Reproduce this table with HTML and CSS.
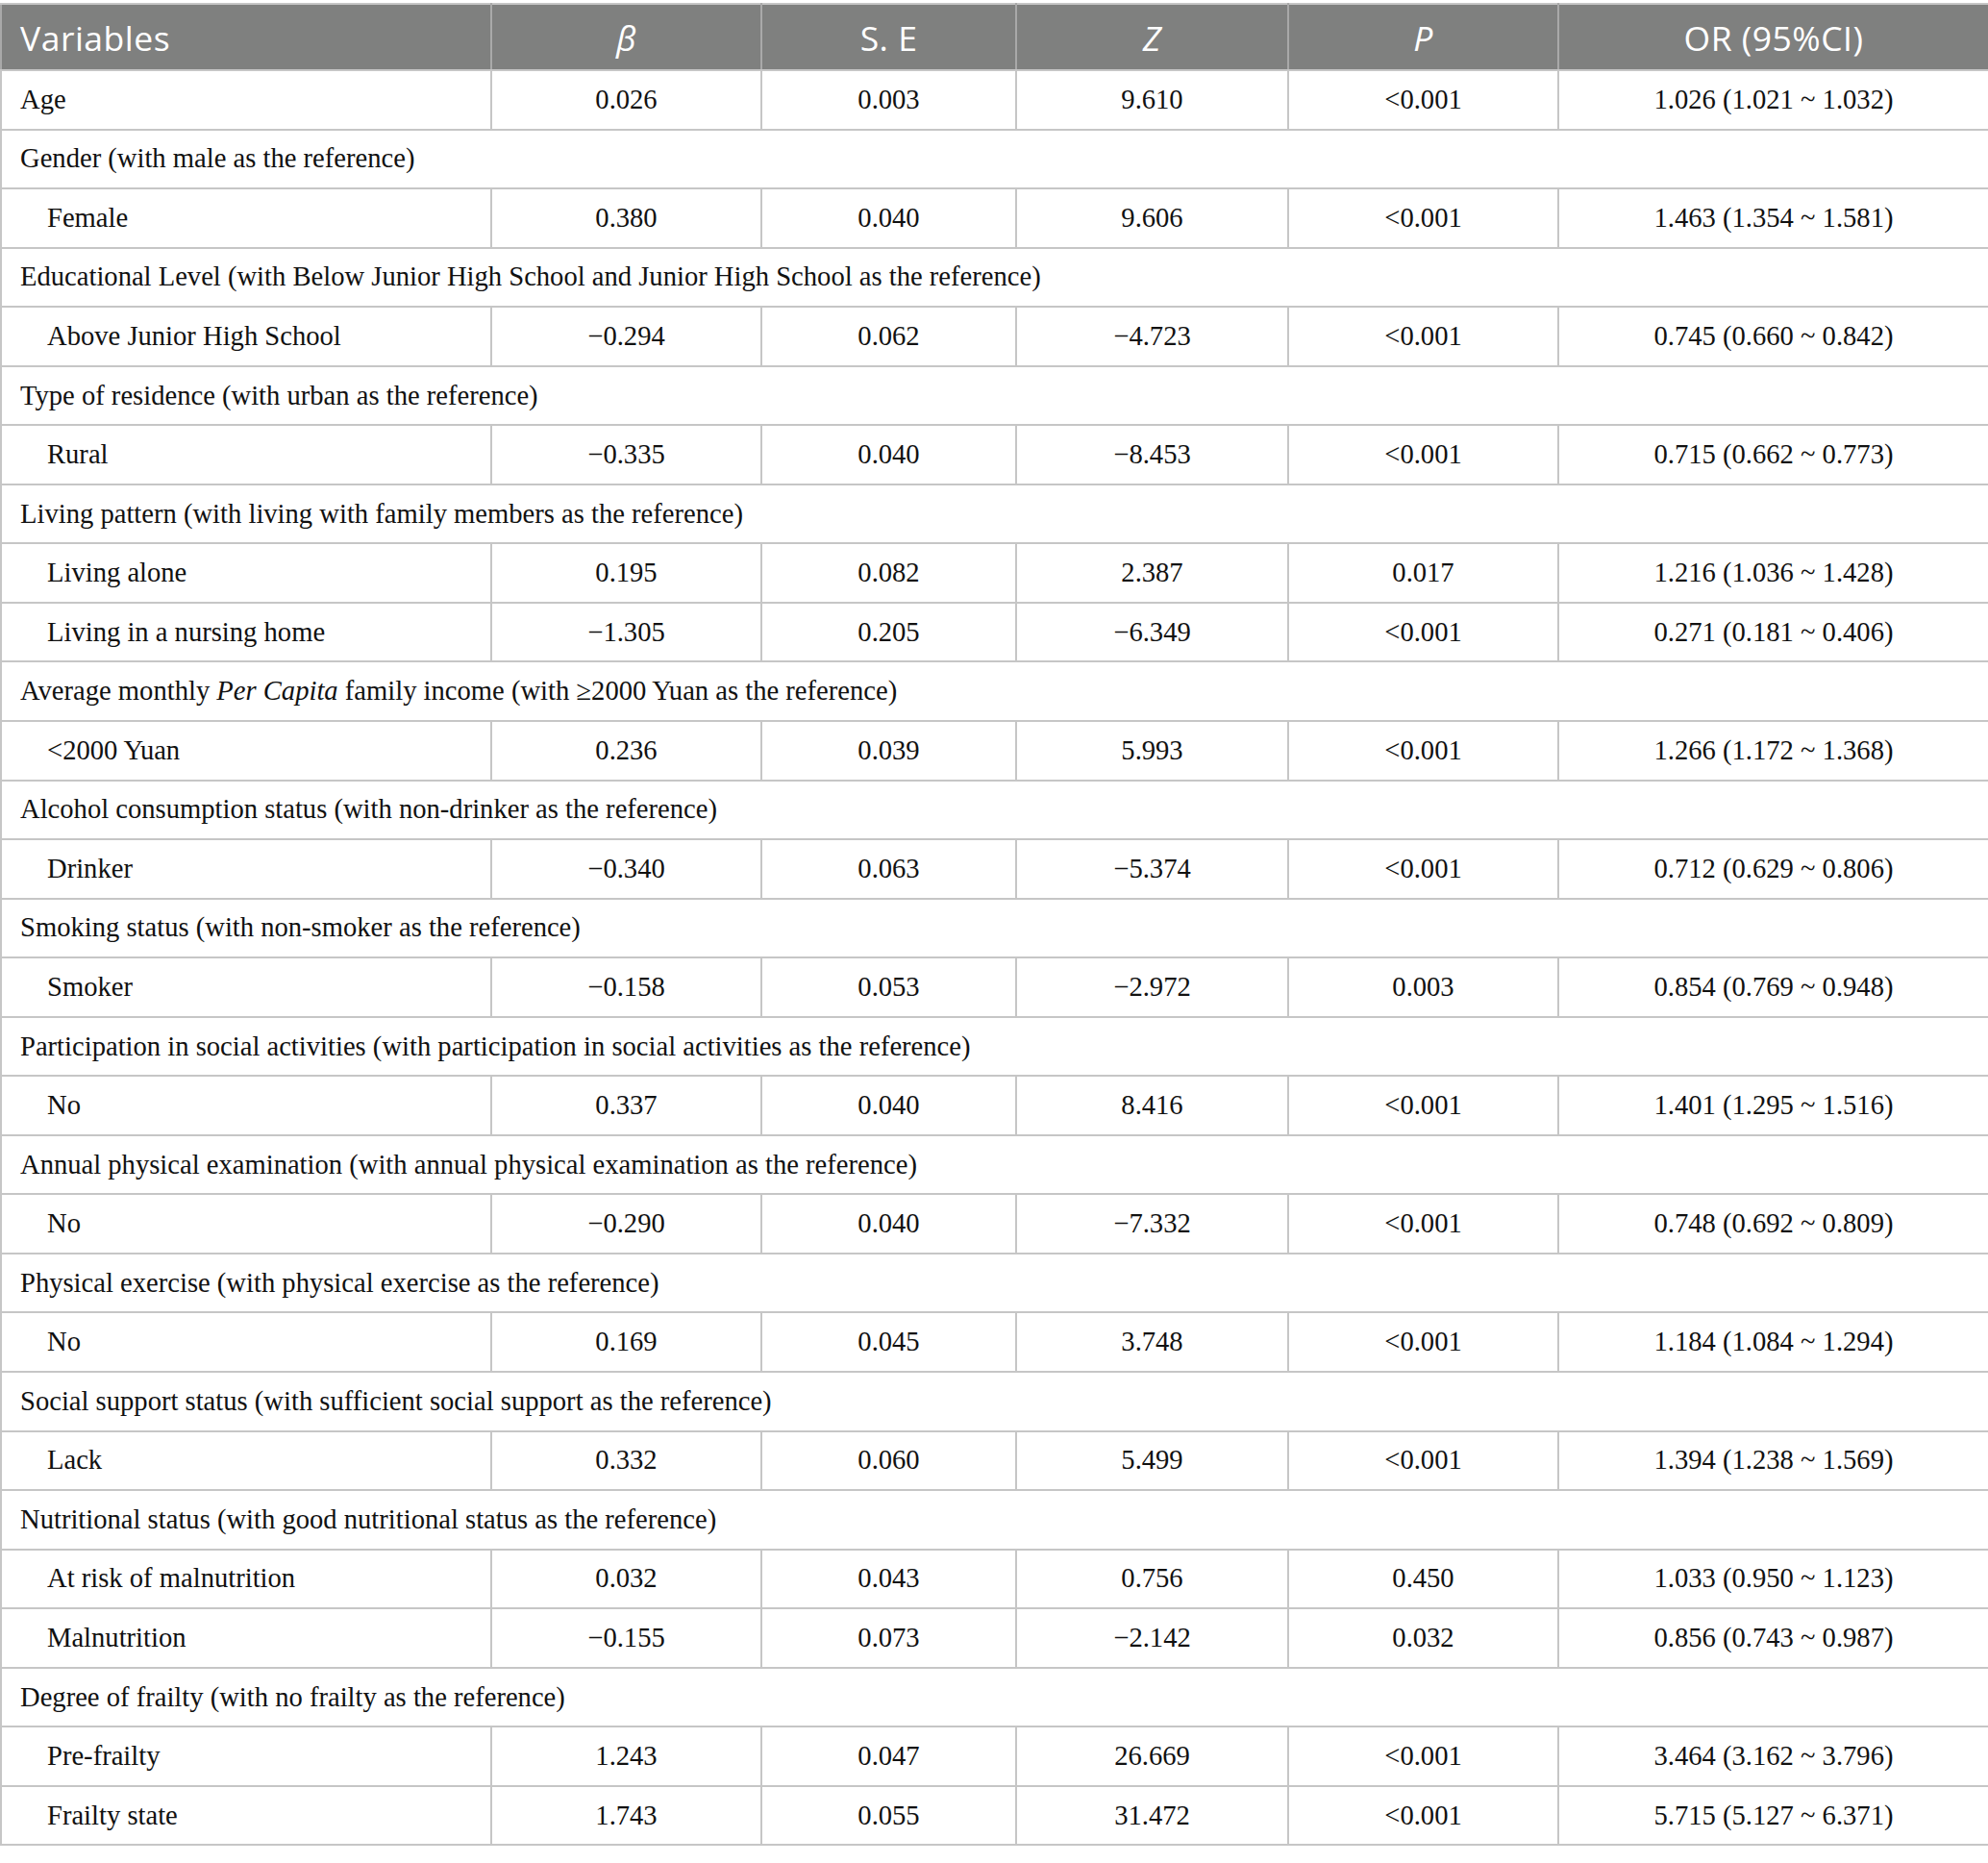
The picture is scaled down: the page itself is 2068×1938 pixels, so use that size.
FILE: index.html
```html
<!DOCTYPE html>
<html lang="en">
<head>
<meta charset="utf-8">
<title>Table</title>
<link rel="stylesheet" href="styles.css">
</head>
<body>
<div class="page">
<table class="tbl">
<colgroup>
<col class="c1"><col class="c2"><col class="c3"><col class="c4"><col class="c5"><col class="c6">
</colgroup>
<thead>
<tr>
<th class="left">Variables</th>
<th><i>β</i></th>
<th>S. E</th>
<th><i>Z</i></th>
<th><i>P</i></th>
<th>OR (95%CI)</th>
</tr>
</thead>
<tbody>
<tr><td class="lab">Age</td><td>0.026</td><td>0.003</td><td>9.610</td><td>&lt;0.001</td><td>1.026 (1.021 ~ 1.032)</td></tr>
<tr><td class="grp" colspan="6">Gender (with male as the reference)</td></tr>
<tr><td class="lab sub">Female</td><td>0.380</td><td>0.040</td><td>9.606</td><td>&lt;0.001</td><td>1.463 (1.354 ~ 1.581)</td></tr>
<tr><td class="grp" colspan="6">Educational Level (with Below Junior High School and Junior High School as the reference)</td></tr>
<tr><td class="lab sub">Above Junior High School</td><td>−0.294</td><td>0.062</td><td>−4.723</td><td>&lt;0.001</td><td>0.745 (0.660 ~ 0.842)</td></tr>
<tr><td class="grp" colspan="6">Type of residence (with urban as the reference)</td></tr>
<tr><td class="lab sub">Rural</td><td>−0.335</td><td>0.040</td><td>−8.453</td><td>&lt;0.001</td><td>0.715 (0.662 ~ 0.773)</td></tr>
<tr><td class="grp" colspan="6">Living pattern (with living with family members as the reference)</td></tr>
<tr><td class="lab sub">Living alone</td><td>0.195</td><td>0.082</td><td>2.387</td><td>0.017</td><td>1.216 (1.036 ~ 1.428)</td></tr>
<tr><td class="lab sub">Living in a nursing home</td><td>−1.305</td><td>0.205</td><td>−6.349</td><td>&lt;0.001</td><td>0.271 (0.181 ~ 0.406)</td></tr>
<tr><td class="grp" colspan="6">Average monthly <i>Per Capita</i> family income (with ≥2000 Yuan as the reference)</td></tr>
<tr><td class="lab sub">&lt;2000 Yuan</td><td>0.236</td><td>0.039</td><td>5.993</td><td>&lt;0.001</td><td>1.266 (1.172 ~ 1.368)</td></tr>
<tr><td class="grp" colspan="6">Alcohol consumption status (with non-drinker as the reference)</td></tr>
<tr><td class="lab sub">Drinker</td><td>−0.340</td><td>0.063</td><td>−5.374</td><td>&lt;0.001</td><td>0.712 (0.629 ~ 0.806)</td></tr>
<tr><td class="grp" colspan="6">Smoking status (with non-smoker as the reference)</td></tr>
<tr><td class="lab sub">Smoker</td><td>−0.158</td><td>0.053</td><td>−2.972</td><td>0.003</td><td>0.854 (0.769 ~ 0.948)</td></tr>
<tr><td class="grp" colspan="6">Participation in social activities (with participation in social activities as the reference)</td></tr>
<tr><td class="lab sub">No</td><td>0.337</td><td>0.040</td><td>8.416</td><td>&lt;0.001</td><td>1.401 (1.295 ~ 1.516)</td></tr>
<tr><td class="grp" colspan="6">Annual physical examination (with annual physical examination as the reference)</td></tr>
<tr><td class="lab sub">No</td><td>−0.290</td><td>0.040</td><td>−7.332</td><td>&lt;0.001</td><td>0.748 (0.692 ~ 0.809)</td></tr>
<tr><td class="grp" colspan="6">Physical exercise (with physical exercise as the reference)</td></tr>
<tr><td class="lab sub">No</td><td>0.169</td><td>0.045</td><td>3.748</td><td>&lt;0.001</td><td>1.184 (1.084 ~ 1.294)</td></tr>
<tr><td class="grp" colspan="6">Social support status (with sufficient social support as the reference)</td></tr>
<tr><td class="lab sub">Lack</td><td>0.332</td><td>0.060</td><td>5.499</td><td>&lt;0.001</td><td>1.394 (1.238 ~ 1.569)</td></tr>
<tr><td class="grp" colspan="6">Nutritional status (with good nutritional status as the reference)</td></tr>
<tr><td class="lab sub">At risk of malnutrition</td><td>0.032</td><td>0.043</td><td>0.756</td><td>0.450</td><td>1.033 (0.950 ~ 1.123)</td></tr>
<tr><td class="lab sub">Malnutrition</td><td>−0.155</td><td>0.073</td><td>−2.142</td><td>0.032</td><td>0.856 (0.743 ~ 0.987)</td></tr>
<tr><td class="grp" colspan="6">Degree of frailty (with no frailty as the reference)</td></tr>
<tr><td class="lab sub">Pre-frailty</td><td>1.243</td><td>0.047</td><td>26.669</td><td>&lt;0.001</td><td>3.464 (3.162 ~ 3.796)</td></tr>
<tr><td class="lab sub">Frailty state</td><td>1.743</td><td>0.055</td><td>31.472</td><td>&lt;0.001</td><td>5.715 (5.127 ~ 6.371)</td></tr>
</tbody>
</table>
</div>
</body>
</html>
```

FILE: styles.css
```css
html, body {
  margin: 0;
  padding: 0;
  background: #ffffff;
}

.page {
  padding-top: 3px;
  width: 2068px;
}

.tbl {
  width: 2068px;
  table-layout: fixed;
  border-collapse: collapse;
  border: 2px solid #c6c6c6;
  color: #111111;
}

.c1 { width: 510px; }
.c2 { width: 281px; }
.c3 { width: 265px; }
.c4 { width: 283px; }
.c5 { width: 281px; }
.c6 { width: 448px; }

.tbl th {
  background: #7f807f;
  color: #ffffff;
  font-family: "Open Sans", "Noto Sans", sans-serif;
  font-weight: 400;
  font-size: 35.5px;
  letter-spacing: 0.5px;
  height: 67px;
  padding: 0;
  text-align: center;
  vertical-align: middle;
  border: 2px solid #a9a9a9;
  border-top-color: #c6c6c6;
  border-bottom-color: #c6c6c6;
}

.tbl th.left {
  text-align: left;
  padding-left: 19px;
}

.tbl td {
  font-family: "Liberation Serif", "Times New Roman", serif;
  font-size: 28.6px;
  height: 59.55px;
  padding: 0;
  text-align: center;
  vertical-align: middle;
  border: 2px solid #c6c6c6;
  white-space: nowrap;
}

.tbl td.lab,
.tbl td.grp {
  text-align: left;
  padding-left: 19px;
}

.tbl td.sub {
  padding-left: 47px;
}
```
